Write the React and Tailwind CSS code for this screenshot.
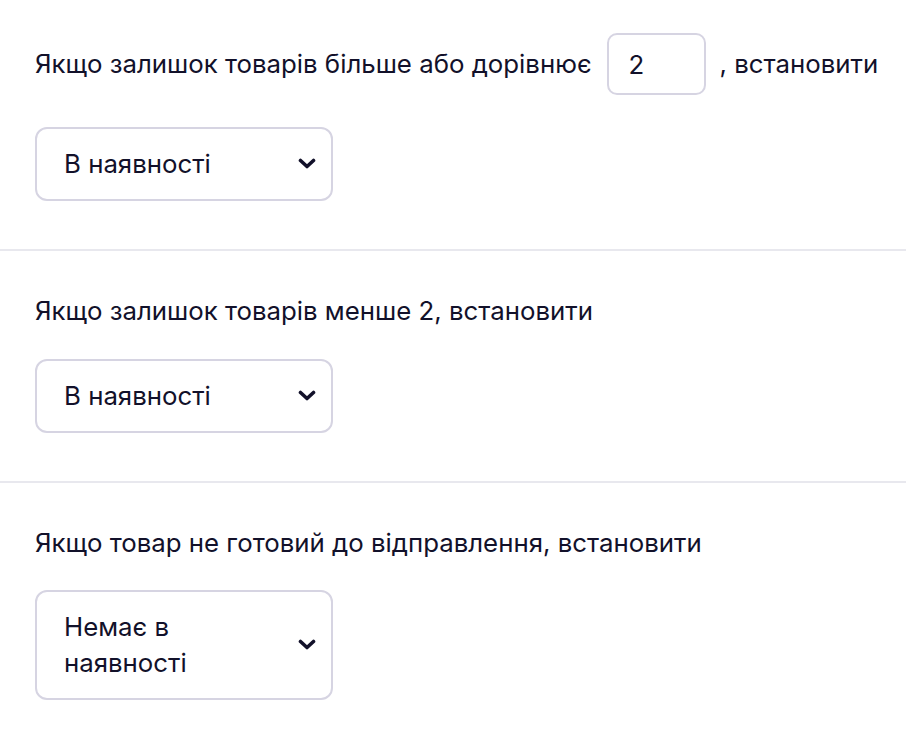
import React, { useState } from 'react';

const Chevron = () => (
  <svg width="18" height="12" viewBox="0 0 18 12" className="shrink-0">
    <path d="M2.5 2.5l6.5 6L15.5 2.5" fill="none" stroke="#12112a" strokeWidth="3.6" strokeLinecap="round" strokeLinejoin="round" />
  </svg>
);

const StatusSelect = ({ value }) => (
  <div className="w-[298px] rounded-[12px] border-2 border-[#d6d4e2] bg-white pl-[27px] pr-[15px] py-[17px] flex items-center justify-between">
    <span className="w-[200px] leading-[36px]">{value}</span>
    <Chevron />
  </div>
);

export default function App() {
  const [minStock, setMinStock] = useState('2');

  return (
    <div className="bg-white text-[#12112a] text-[25.8px] font-['Inter',sans-serif] min-h-[740px]">
      <section className="pt-[33px] pb-[48px] px-[35px] border-b-2 border-[#e8e8ee]">
        <div className="flex items-center h-[62px] whitespace-nowrap">
          <span>Якщо залишок товарів більше або дорівнює</span>
          <input
            value={minStock}
            onChange={(e) => setMinStock(e.target.value)}
            className="ml-[15px] mr-[14px] w-[99px] h-[62px] rounded-[10px] border-2 border-[#d6d4e2] pl-[20px] outline-none"
          />
          <span>, встановити</span>
        </div>
        <div className="mt-[32px]">
          <StatusSelect value="В наявності" />
        </div>
      </section>

      <section className="pt-[45px] pb-[48px] px-[35px] border-b-2 border-[#e8e8ee]">
        <p className="leading-[30px]">Якщо залишок товарів менше 2, встановити</p>
        <div className="mt-[33px]">
          <StatusSelect value="В наявності" />
        </div>
      </section>

      <section className="pt-[45px] pb-[40px] px-[35px]">
        <p className="leading-[30px]">Якщо товар не готовий до відправлення, встановити</p>
        <div className="mt-[32px]">
          <StatusSelect value="Немає в наявності" />
        </div>
      </section>
    </div>
  );
}
